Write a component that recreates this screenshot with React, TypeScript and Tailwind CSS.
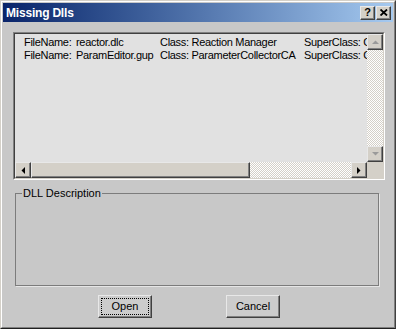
import React from 'react';

const rows = [
  { file: 'reactor.dlc', cls: 'Class: Reaction Manager', sup: 'SuperClass: GUP' },
  { file: 'ParamEditor.gup', cls: 'Class: ParameterCollectorCA', sup: 'SuperClass: GUP' },
];

const checker =
  'bg-[repeating-conic-gradient(#d4d0c8_0_25%,#ffffff_0_50%)] bg-[length:2px_2px]';

const raised =
  'border border-t-[#e8e8e8] border-l-[#e8e8e8] border-r-[#404040] border-b-[#404040] shadow-[inset_-1px_-1px_0_#808080]';

function Arrow({ dir, disabled }: { dir: 'up' | 'down' | 'left' | 'right'; disabled?: boolean }) {
  const pts = {
    up: '0,4 7,4 3.5,0.5',
    down: '0,0 7,0 3.5,3.5',
    left: '4,0 4,7 0.5,3.5',
    right: '0,0 0,7 3.5,3.5',
  }[dir];
  const vb = dir === 'up' || dir === 'down' ? '0 0 7 4' : '0 0 4 7';
  const w = dir === 'up' || dir === 'down' ? 7 : 4;
  const h = dir === 'up' || dir === 'down' ? 4 : 7;
  return (
    <svg width={w} height={h} viewBox={vb}>
      <polygon points={pts} fill={disabled ? '#9a9a9a' : '#000'} />
    </svg>
  );
}

function ScrollBtn({ dir, disabled }: { dir: 'up' | 'down' | 'left' | 'right'; disabled?: boolean }) {
  return (
    <div className={`w-[16px] h-[16px] shrink-0 bg-[#d4d0c8] flex items-center justify-center ${raised}`}>
      <Arrow dir={dir} disabled={disabled} />
    </div>
  );
}

function TitleBar() {
  return (
    <div className="h-[19px] shrink-0 flex items-center bg-linear-to-r from-[#0a246a] to-[#a6caf0] pl-[3px] pr-[2px]">
      <span className="flex-1 text-white font-bold text-[12px] leading-none tracking-[-0.2px]">Missing Dlls</span>
      <div className="flex gap-[1px]">
        <div className={`w-[15px] h-[14px] bg-[#d4d0c8] flex items-center justify-center text-[11px] font-bold leading-none ${raised}`}>
          ?
        </div>
        <div className={`w-[15px] h-[14px] bg-[#d4d0c8] flex items-center justify-center ${raised}`}>
          <svg width="8" height="7" viewBox="0 0 8 7">
            <path d="M0.5 0.5 L7 6.5 M7 0.5 L0.5 6.5" stroke="#000" strokeWidth="1.8" />
          </svg>
        </div>
      </div>
    </div>
  );
}

function DllList() {
  return (
    <div className="h-[148px] shrink-0 border border-t-[#808080] border-l-[#808080] border-r-white border-b-white">
      <div className="h-full border border-t-[#404040] border-l-[#404040] border-r-[#d4d0c8] border-b-[#d4d0c8] flex flex-col bg-[#e1e1e1]">
        <div className="flex-1 flex min-h-0">
          <div className="flex-1 overflow-hidden pl-[9px] pt-[2px]">
            {rows.map((r) => (
              <div key={r.file} className="grid grid-cols-[52px_84px_144px_auto] leading-[13px] whitespace-nowrap tracking-[-0.3px]">
                <span>FileName:</span>
                <span>{r.file}</span>
                <span>{r.cls}</span>
                <span>{r.sup}</span>
              </div>
            ))}
          </div>
          <div className="w-[16px] flex flex-col">
            <ScrollBtn dir="up" disabled />
            <div className={`flex-1 ${checker}`} />
            <ScrollBtn dir="down" disabled />
          </div>
        </div>
        <div className="h-[16px] flex shrink-0">
          <ScrollBtn dir="left" />
          <div className={`w-[219px] bg-[#d4d0c8] ${raised}`} />
          <div className={`flex-1 ${checker}`} />
          <ScrollBtn dir="right" />
          <div className="w-[16px] bg-[#d4d0c8]" />
        </div>
      </div>
    </div>
  );
}

function Button({ label, focused }: { label: string; focused?: boolean }) {
  return (
    <div className={`w-[54px] h-[23px] bg-[#cccccc] p-[2px] ${raised}`}>
      <div className={`h-full flex items-center justify-center ${focused ? 'border border-dotted border-black' : ''}`}>
        {label}
      </div>
    </div>
  );
}

export default function App() {
  return (
    <div className="w-[396px] h-[329px] border border-t-[#d4d0c8] border-l-[#d4d0c8] border-r-[#404040] border-b-[#202020] bg-[#c8c8c8] font-['Liberation_Sans',Arial,sans-serif] text-[11px] text-black">
      <div className="h-full border border-t-white border-l-white border-r-[#808080] border-b-[#808080] p-px flex flex-col">
        <TitleBar />
        <div className="flex-1 flex flex-col pl-[10px] pr-[8px] pt-[10px]">
          <DllList />
          <fieldset className="mt-[7px] ml-[2px] mr-[6px] h-[99px] border border-[#7c7c7c] shadow-[1px_1px_0_#e6e6e6] pl-[6px]">
            <legend className="px-[1px] leading-[13px]">DLL Description</legend>
          </fieldset>
          <div className="mt-[9px] ml-[85px] flex gap-[74px]">
            <Button label="Open" focused />
            <Button label="Cancel" />
          </div>
        </div>
      </div>
    </div>
  );
}
